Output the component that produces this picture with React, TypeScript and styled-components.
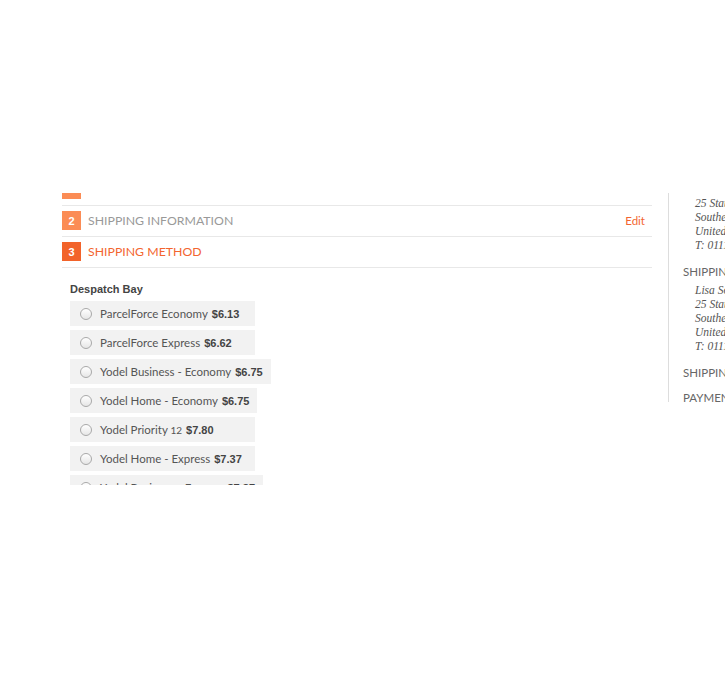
import React from 'react';
import styled, { createGlobalStyle } from 'styled-components';

const GlobalStyle = createGlobalStyle`
  html, body {
    margin: 0;
    padding: 0;
    background: #fff;
    overflow: hidden;
  }
  body {
    font-family: Lato, "Open Sans", sans-serif;
    color: #555;
  }
`;

const Page = styled.div`
  padding-top: 193px;
  width: 1000px;
`;

// the checkout pane is scrolled; we only see a slice of it
const Viewport = styled.div`
  display: flex;
  align-items: flex-start;
  height: 292px;
  overflow: hidden;
  padding-left: 62px;
`;

const Main = styled.section`
  width: 590px;
  flex-shrink: 0;
  margin-right: 16px;
`;

const Scrolled = styled.div<{ $offset: number }>`
  margin-top: ${(p) => -p.$offset}px;
`;

const StepRow = styled.div`
  display: flex;
  align-items: center;
  padding: 5px 0 6px;
  border-bottom: 1px solid #e8e8e8;
`;

const Badge = styled.span<{ $active?: boolean }>`
  width: 19px;
  height: 19px;
  display: flex;
  align-items: center;
  justify-content: center;
  margin-right: 7px;
  background: ${(p) => (p.$active ? '#f2632a' : '#fb8c55')};
  color: #fff;
  font-family: "Liberation Sans", Arial, sans-serif;
  font-weight: bold;
  font-size: 11px;
`;

const StepTitle = styled.span<{ $active?: boolean }>`
  flex: 1;
  font-size: 12.3px;
  line-height: 18px;
  color: ${(p) => (p.$active ? '#f3652f' : '#999')};
`;

const EditLink = styled.a`
  margin-right: 7px;
  font-size: 11.5px;
  color: #f3652f;
  text-decoration: none;
`;

const Methods = styled.div`
  padding: 14px 0 0 8px;
`;

const Carrier = styled.div`
  font-family: "Liberation Sans", Arial, sans-serif;
  font-weight: bold;
  font-size: 11px;
  line-height: 14px;
  color: #444;
  margin-bottom: 5px;
`;

const OptionList = styled.div`
  display: flex;
  flex-direction: column;
  align-items: flex-start;
  gap: 4px;
`;

const Option = styled.label`
  display: flex;
  align-items: center;
  box-sizing: border-box;
  height: 25px;
  min-width: 185px;
  padding: 0 8px 0 10px;
  background: #f2f2f2;
  font-size: 11.5px;
  color: #555;
  white-space: nowrap;
`;

const Radio = styled.span`
  width: 10px;
  height: 10px;
  border-radius: 50%;
  border: 1px solid #a9a9a9;
  background: linear-gradient(#fff, #e6e6e6);
  margin-right: 8px;
  flex-shrink: 0;
`;

const Price = styled.b`
  margin-left: 4px;
  font-family: "Liberation Sans", Arial, sans-serif;
  font-size: 11px;
  color: #444;
`;

const Small = styled.span`
  font-size: 10px;
`;

const Sidebar = styled.aside`
  width: 220px;
  height: 209px;
  flex-shrink: 0;
  overflow: hidden;
  border-left: 1px solid #ddd;
  padding-left: 14px;
`;

const SideSection = styled.div`
  padding-bottom: 5px;
`;

const SideTitle = styled.div`
  font-size: 11.5px;
  line-height: 18px;
  color: #666;
  margin-bottom: 2px;
  white-space: nowrap;
`;

const Address = styled.address`
  margin: 0 0 6px 12px;
  font-family: "Liberation Serif", Georgia, serif;
  font-style: italic;
  font-size: 11.5px;
  line-height: 14px;
  color: #555;
  white-space: nowrap;
`;

const options = [
  { name: 'ParcelForce Economy', price: '$6.13' },
  { name: 'ParcelForce Express', price: '$6.62' },
  { name: 'Yodel Business - Economy', price: '$6.75' },
  { name: 'Yodel Home - Economy', price: '$6.75' },
  { name: 'Yodel Priority', small: '12', price: '$7.80' },
  { name: 'Yodel Home - Express', price: '$7.37' },
  { name: 'Yodel Business - Express', price: '$7.87' },
];

const addressLines = [
  '25 Station Road',
  'Southend-on-Sea, SS1 1AA',
  'United Kingdom',
  'T: 01111 111111',
];

function AddressBlock() {
  return (
    <Address>
      Lisa Somers
      {addressLines.map((l) => (
        <React.Fragment key={l}>
          <br />
          {l}
        </React.Fragment>
      ))}
    </Address>
  );
}

export default function App() {
  return (
    <Page>
      <GlobalStyle />
      <Viewport>
        <Main>
          <Scrolled $offset={18}>
            <StepRow>
              <Badge />
            </StepRow>
            <StepRow>
              <Badge>2</Badge>
              <StepTitle>SHIPPING INFORMATION</StepTitle>
              <EditLink href="#">Edit</EditLink>
            </StepRow>
            <StepRow>
              <Badge $active>3</Badge>
              <StepTitle $active>SHIPPING METHOD</StepTitle>
            </StepRow>
            <Methods>
              <Carrier>Despatch Bay</Carrier>
              <OptionList>
                {options.map((o) => (
                  <Option key={o.name + o.price}>
                    <Radio />
                    {o.name}
                    {o.small && <Small>&nbsp;{o.small}</Small>}
                    <Price>{o.price}</Price>
                  </Option>
                ))}
              </OptionList>
            </Methods>
          </Scrolled>
        </Main>
        <Sidebar>
          <Scrolled $offset={31}>
            <SideSection>
              <SideTitle>BILLING ADDRESS</SideTitle>
              <AddressBlock />
            </SideSection>
            <SideSection>
              <SideTitle>SHIPPING ADDRESS</SideTitle>
              <AddressBlock />
            </SideSection>
            <SideSection>
              <SideTitle>SHIPPING METHOD</SideTitle>
            </SideSection>
            <SideSection>
              <SideTitle>PAYMENT METHOD</SideTitle>
            </SideSection>
          </Scrolled>
        </Sidebar>
      </Viewport>
    </Page>
  );
}
